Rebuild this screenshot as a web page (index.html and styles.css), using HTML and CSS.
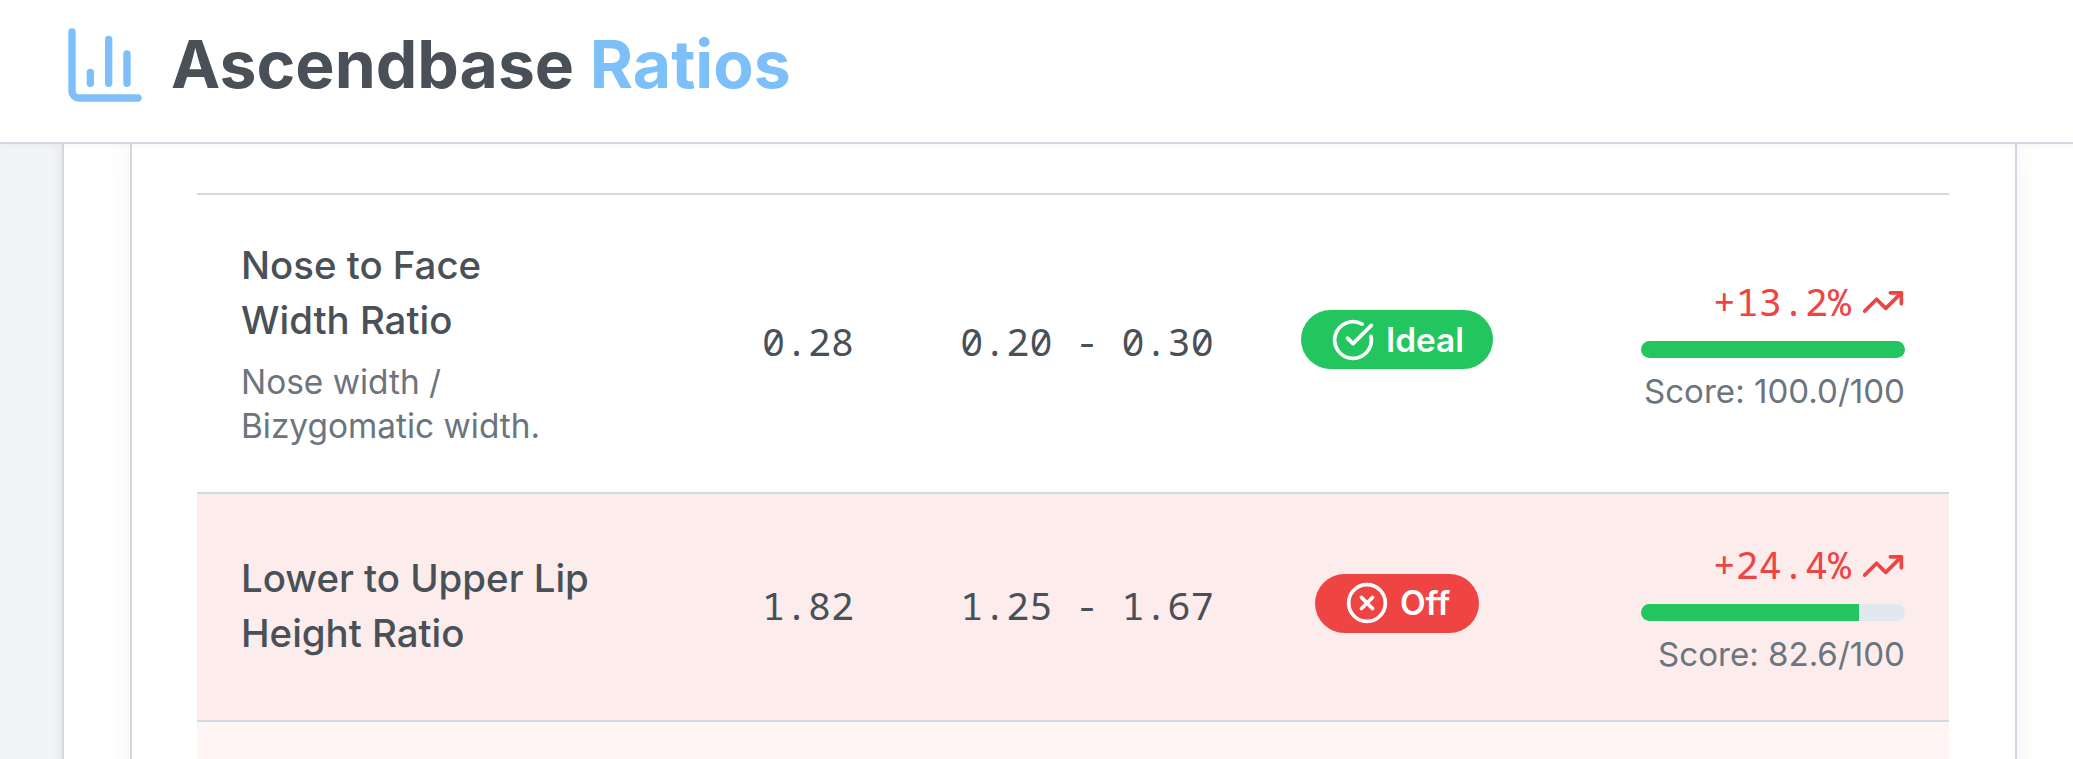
FILE: index.html
```html
<!DOCTYPE html>
<html lang="en">
<head>
    <meta charset="UTF-8">
    <meta name="viewport" content="width=device-width, initial-scale=1.0">
    <title>Ascendbase Ratios</title>
    <link rel="stylesheet" href="styles.css">
</head>
<body>
    <header class="site-header">
        <svg class="logo" viewBox="0 0 24 24" fill="none" stroke="currentColor" stroke-width="2" stroke-linecap="round" stroke-linejoin="round">
            <path d="M3 3v16a2 2 0 0 0 2 2h16"/>
            <path d="M18 17V9"/>
            <path d="M13 17V5"/>
            <path d="M8 17v-3"/>
        </svg>
        <h1 class="brand">Ascendbase <span class="brand-accent">Ratios</span></h1>
    </header>

    <main class="panel">
        <section class="card">
            <div class="ratio-list">
                <div class="ratio-row">
                    <div class="ratio-name">
                        <h3>Nose to Face<br>Width Ratio</h3>
                        <p>Nose width /<br>Bizygomatic width.</p>
                    </div>
                    <div class="mono">0.28</div>
                    <div class="mono">0.20 - 0.30</div>
                    <div class="status">
                        <span class="badge badge-ideal">
                            <svg class="badge-icon" viewBox="0 0 24 24" fill="none" stroke="currentColor" stroke-width="2" stroke-linecap="round" stroke-linejoin="round">
                                <path d="M21.801 10A10 10 0 1 1 17 3.335"/>
                                <path d="m9 11 3 3L22 4"/>
                            </svg>
                            Ideal
                        </span>
                    </div>
                    <div class="score">
                        <div class="delta">
                            <span>+13.2%</span>
                            <svg class="delta-icon" viewBox="0 0 24 24" fill="none" stroke="currentColor" stroke-width="2" stroke-linecap="round" stroke-linejoin="round">
                                <polyline points="22 7 13.5 15.5 8.5 10.5 2 17"/>
                                <polyline points="16 7 22 7 22 13"/>
                            </svg>
                        </div>
                        <div class="bar"><div class="bar-fill" style="width: 100%"></div></div>
                        <div class="score-text">Score: 100.0/100</div>
                    </div>
                </div>

                <div class="ratio-row row-off">
                    <div class="ratio-name">
                        <h3>Lower to Upper Lip<br>Height Ratio</h3>
                    </div>
                    <div class="mono">1.82</div>
                    <div class="mono">1.25 - 1.67</div>
                    <div class="status">
                        <span class="badge badge-off">
                            <svg class="badge-icon" viewBox="0 0 24 24" fill="none" stroke="currentColor" stroke-width="2" stroke-linecap="round" stroke-linejoin="round">
                                <circle cx="12" cy="12" r="10"/>
                                <path d="m15 9-6 6"/>
                                <path d="m9 9 6 6"/>
                            </svg>
                            Off
                        </span>
                    </div>
                    <div class="score">
                        <div class="delta">
                            <span>+24.4%</span>
                            <svg class="delta-icon" viewBox="0 0 24 24" fill="none" stroke="currentColor" stroke-width="2" stroke-linecap="round" stroke-linejoin="round">
                                <polyline points="22 7 13.5 15.5 8.5 10.5 2 17"/>
                                <polyline points="16 7 22 7 22 13"/>
                            </svg>
                        </div>
                        <div class="bar"><div class="bar-fill" style="width: 82.6%"></div></div>
                        <div class="score-text">Score: 82.6/100</div>
                    </div>
                </div>

                <div class="ratio-row row-next"></div>
            </div>
        </section>
    </main>
</body>
</html>
```

FILE: styles.css
```css
html, body {
    height: 100%;
    overflow: hidden;
}
body {
    font-family: 'Inter', 'Liberation Sans', sans-serif;
    background: #f3f4f8;
    color: #495057;
    margin: 0;
    padding: 0;
}
.site-header {
    position: relative;
    z-index: 2;
    display: flex;
    align-items: center;
    gap: 22px;
    height: 89px;
    padding: 20px 0 33px 61px;
    background: #fff;
    border-bottom: 2px solid #d1d9e2;
    box-shadow: 0 2px 6px rgba(0, 0, 0, 0.04);
}
.logo {
    width: 88px;
    height: 88px;
    color: #7cbff9;
    flex-shrink: 0;
}
.brand {
    font-size: 66px;
    font-weight: 700;
    line-height: 89px;
    margin: 0;
}
.brand-accent {
    color: #7cbff9;
}
.panel {
    width: 2024px;
    height: 700px;
    margin-left: 62px;
    padding: 0 66px;
    box-sizing: border-box;
    background: #fff;
    border-left: 2px solid #d1d9e2;
    box-shadow: -4px 0 10px rgba(0, 0, 0, 0.05);
}
.card {
    width: 1887px;
    height: 700px;
    box-sizing: border-box;
    padding: 49px 66px 0 65px;
    background: #fff;
    border-left: 2px solid #d1d9e2;
    border-right: 2px solid #d1d9e2;
    box-shadow: 0 0 30px rgba(0, 0, 0, 0.05);
}
.ratio-list {
    border-top: 2px solid #d1d9e2;
}
.ratio-row {
    display: grid;
    grid-template-columns: 503px 216px 342px 278px 1fr;
    align-items: center;
    padding: 44px 44px 44px 0;
    border-bottom: 2px solid #d1d9e2;
}
.row-off {
    background: #fcecec;
}
.row-next {
    height: 200px;
    background: #fef5f4;
    border-bottom: none;
}
.ratio-name {
    padding-left: 44px;
}
.ratio-name h3 {
    font-size: 38.4px;
    font-weight: 500;
    line-height: 55px;
    margin: -1px 0 1px;
}
.ratio-name p {
    font-size: 33.4px;
    line-height: 43.5px;
    color: #6c757d;
    margin: 13px 0 0;
}
.mono {
    font-family: 'Noto Sans Mono', 'Liberation Mono', monospace;
    font-size: 38.4px;
    padding-bottom: 5px;
    text-align: center;
}
.status {
    padding-bottom: 8px;
    text-align: center;
}
.badge {
    display: inline-flex;
    align-items: center;
    gap: 11px;
    height: 59px;
    padding: 0 29px 0 30px;
    box-sizing: border-box;
    border-radius: 30px;
    color: #fff;
    font-size: 33.4px;
    font-weight: 600;
}
.badge-ideal {
    background: #22c55e;
}
.badge-off {
    background: #ef4444;
}
.badge-icon {
    width: 44px;
    height: 44px;
}
.score {
    display: flex;
    flex-direction: column;
    align-items: flex-end;
}
.delta {
    display: flex;
    align-items: center;
    gap: 10px;
    height: 55px;
    color: #ef4444;
    font-family: 'Noto Sans Mono', 'Liberation Mono', monospace;
    font-size: 38.4px;
}
.delta span {
    padding-bottom: 3px;
}
.delta-icon {
    width: 44px;
    height: 44px;
}
.bar {
    width: 264px;
    height: 17px;
    margin: 11px 0;
    background: #e2e8f0;
    border-radius: 9px;
    overflow: hidden;
}
.bar-fill {
    height: 100%;
    background: #22c55e;
}
.score-text {
    font-size: 33.1px;
    line-height: 44px;
    color: #6c757d;
}
```
